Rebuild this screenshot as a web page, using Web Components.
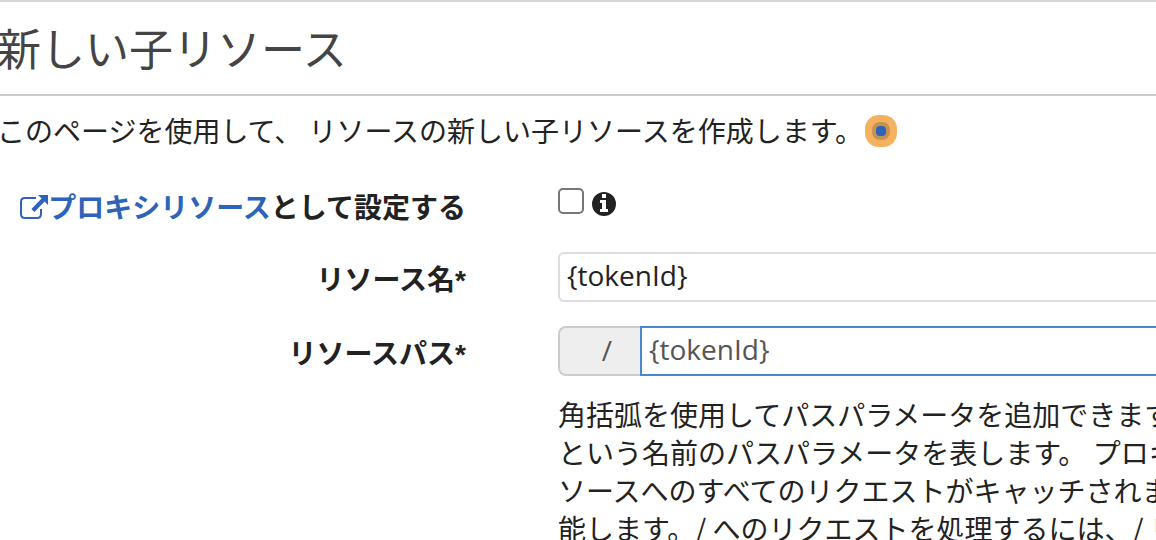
<!DOCTYPE html>
<html lang="ja">
<head>
<meta charset="utf-8">
<title>新しい子リソース</title>
<style>
body{margin:0;background:#fff;color:#222;font:28px/38px "Noto Sans CJK JP",sans-serif;overflow:hidden}
</style>
</head>
<body>
<resource-page></resource-page>
<script>
const define=(name,html)=>customElements.define(name,class extends HTMLElement{
  constructor(){super();this.attachShadow({mode:'open'}).innerHTML=html;}
});

define('page-heading',`<style>
:host{display:block;border-top:2px solid #d5d5d5;border-bottom:2px solid #ccc}
h1{margin:0 0 0 -3px;padding:15px 0 17px;font-size:44px;line-height:60px;font-weight:400;color:#444;white-space:nowrap}
</style><h1><slot></slot></h1>`);

define('focus-hotspot',`<style>
:host{display:block;width:32px;height:32px}svg{display:block}
</style><svg width="32" height="32" viewBox="0 0 32 32" aria-hidden="true">
<rect width="32" height="32" rx="14" fill="#f4b25f"/><rect x="7" y="7" width="18" height="18" rx="8" fill="#c69253"/><rect x="11" y="11" width="10" height="10" rx="4" fill="#2d63b8"/></svg>`);

define('link-icon',`<style>:host{display:block;width:28px;height:28px}svg{display:block}</style>
<svg width="28" height="28" viewBox="0 0 28 28" aria-hidden="true"><path d="M16 6H5Q1 6 1 10V22Q1 26 5 26H17Q21 26 21 22V17" fill="none" stroke="#2d63b8" stroke-width="2"/><path d="M18 3H28V13L24.6 9.6L14.4 20L11.4 17L21.6 6.6Z" fill="#2d63b8"/></svg>`);

define('info-icon',`<style>:host{display:block;width:24px;height:24px}svg{display:block}</style>
<svg width="24" height="24" viewBox="0 0 24 24" aria-hidden="true"><circle cx="12" cy="12" r="12" fill="#222"/><path d="M10 2h4v4h-4zM8 8h6v9h2v3H8v-3h2v-6H8z" fill="#fff"/></svg>`);

define('proxy-field',`<style>
:host{display:grid;grid-template-columns:466px minmax(0,1fr);column-gap:92px;height:38px}
.label{display:flex;justify-content:flex-end;align-items:center;height:36px;font-weight:700;white-space:nowrap}
a{display:flex;align-items:center;color:#2d63b8;text-decoration:none}
.control{display:flex;align-items:flex-start;gap:8px}
input{appearance:none;box-sizing:border-box;width:26px;height:26px;margin:0;border:2px solid #767676;border-radius:5px;background:#fff}
info-icon{margin-top:4px}
</style><div class="label"><a href="#proxy"><link-icon></link-icon>プロキシリソース</a><label for="proxy">として設定する</label></div>
<div class="control"><input id="proxy" type="checkbox"><info-icon></info-icon></div>`);

customElements.define('text-field',class extends HTMLElement{
  constructor(){
    super();
    const prefix=this.getAttribute('prefix');
    this.attachShadow({mode:'open'}).innerHTML=`<style>
:host{display:grid;grid-template-columns:466px minmax(0,1fr);column-gap:92px;height:50px}
label{text-align:right;font:700 28px/58px "Liberation Sans","Noto Sans CJK JP",sans-serif;white-space:nowrap}
.control{display:flex;height:50px;margin-right:-12px}
.prefix{box-sizing:border-box;width:82px;padding-right:28px;border:2px solid #ccc;border-right:0;border-radius:8px 0 0 8px;background:#eee;color:#555;font:28px/44px "Open Sans",sans-serif;text-align:right}
input{box-sizing:border-box;flex:1;min-width:0;height:50px;margin:0;padding:0 7px 4px;border:2px solid #ddd;border-radius:6px;background:#fff;color:#222;font:28px "Open Sans",sans-serif;outline:0}
.prefix+input{border-color:#4a87d3;border-radius:0;color:#555}
</style><label for="field"><slot></slot></label><div class="control">${prefix?`<span class="prefix">${prefix}</span>`:''}<input id="field" type="text" value="${this.getAttribute('value')}"></div>`;
  }
});

define('help-text',`<style>
:host{display:block;margin-left:558px;white-space:nowrap}p{margin:0}
</style><p><slot></slot></p>`);

define('resource-page',`<style>
:host{display:block}
.intro{display:flex;align-items:center;gap:2px;height:38px;margin:16px 0 0 -3px;white-space:nowrap}
.intro p{margin:0;padding-bottom:2px}
form{display:flex;flex-direction:column;gap:24px;margin-top:38px}
proxy-field{margin-bottom:2px}
help-text{margin-top:-5px}
</style>
<page-heading>新しい子リソース</page-heading>
<div class="intro"><p>このページを使用して、 リソースの新しい子リソースを作成します。</p><focus-hotspot></focus-hotspot></div>
<form>
<proxy-field></proxy-field>
<text-field value="{tokenId}">リソース名*</text-field>
<text-field prefix="/" value="{tokenId}">リソースパス*</text-field>
<help-text>角括弧を使用してパスパラメータを追加できます<br>という名前のパスパラメータを表します。 プロキ<br>ソースへのすべてのリクエストがキャッチされま<br>能します。/ へのリクエストを処理するには、/ リ</help-text>
</form>`);
</script>
</body>
</html>
